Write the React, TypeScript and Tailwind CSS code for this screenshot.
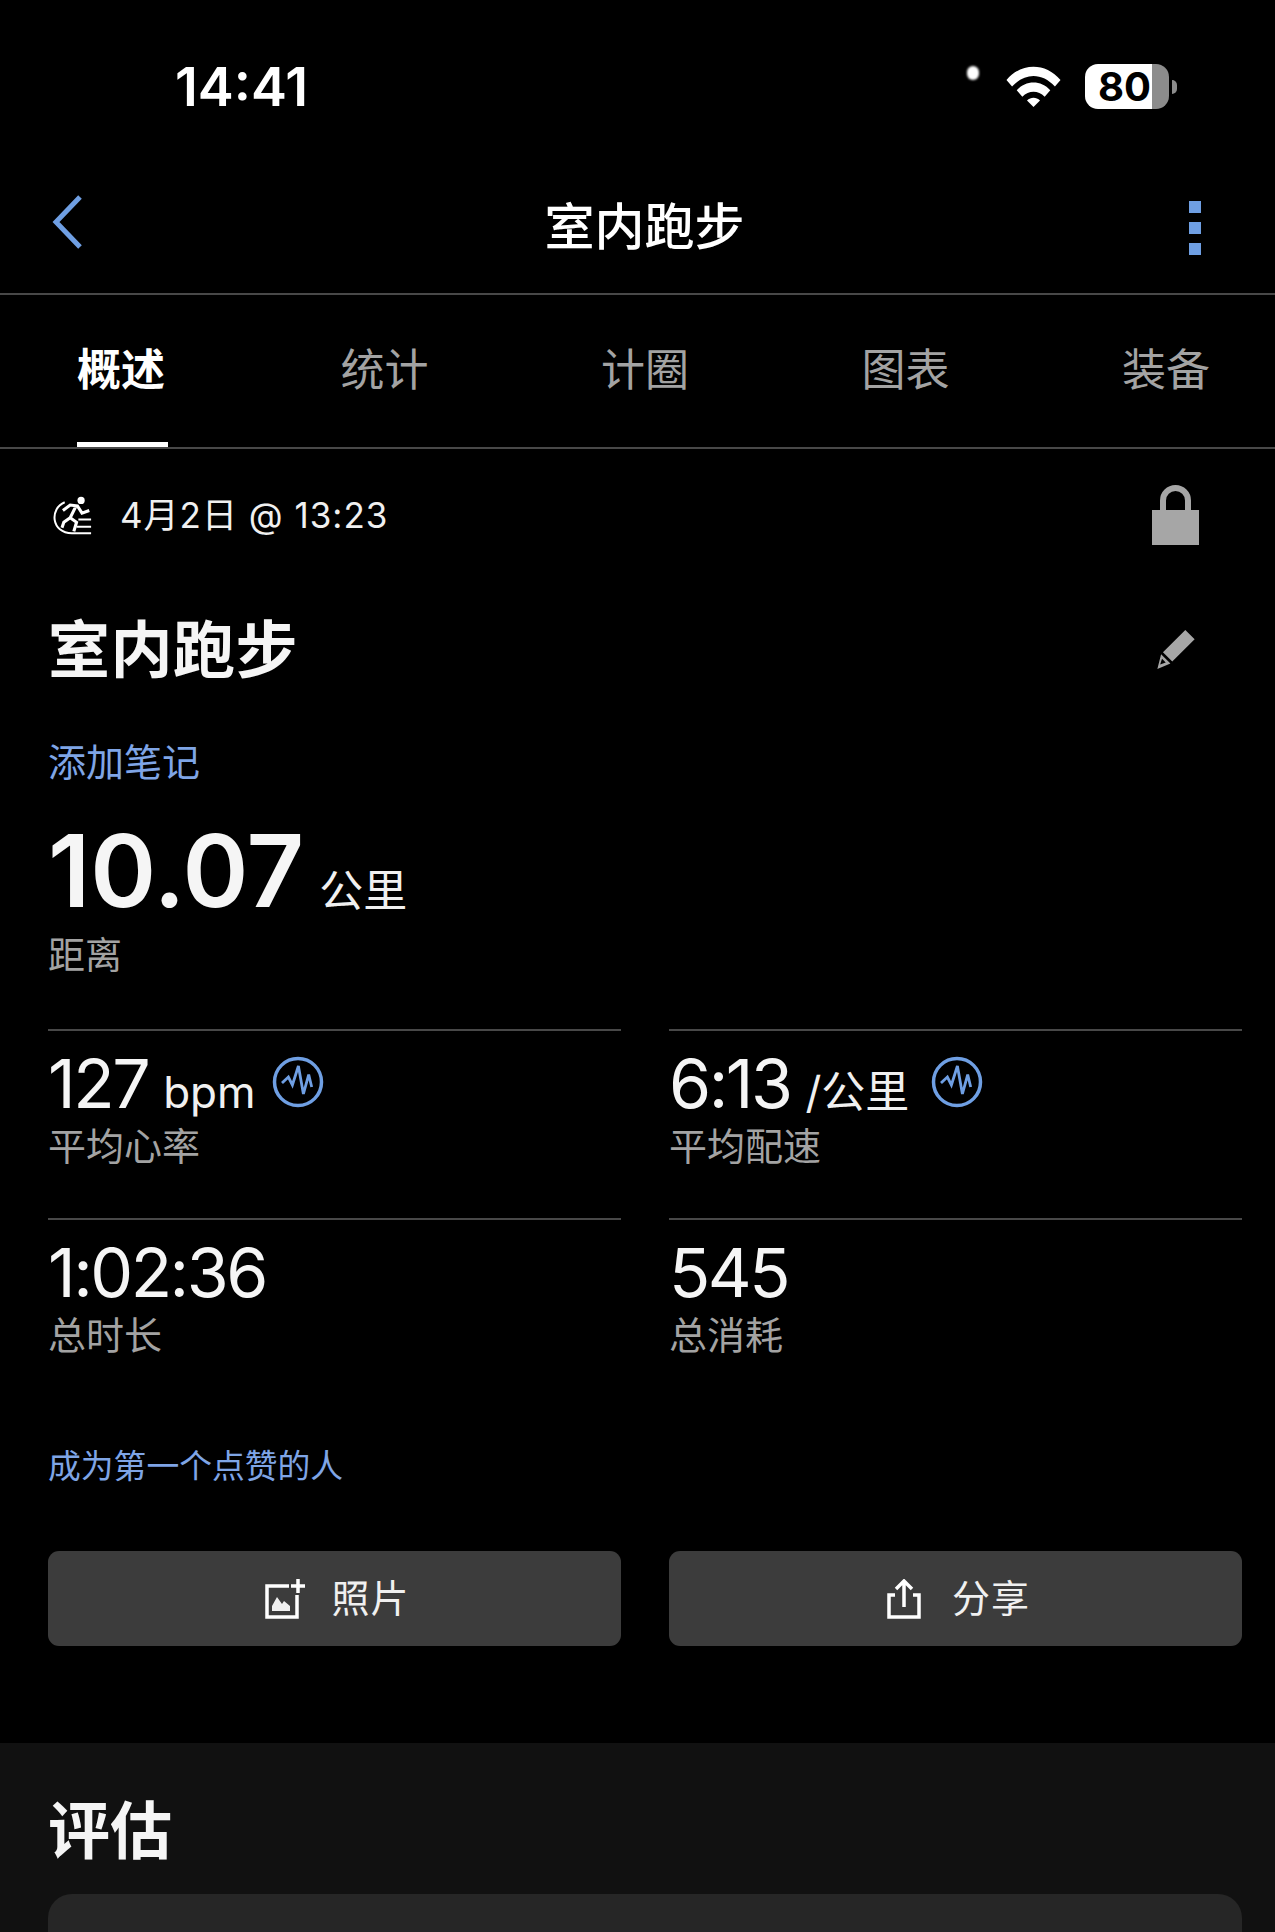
const Pulse = () => (
  <svg width="52" height="52" viewBox="0 0 52 52" fill="none" className="shrink-0">
    <circle cx="26" cy="26" r="23.5" stroke="#6f9fe3" strokeWidth="3.5" />
    <path d="M10 27l6.400-6 4 8 6-19 5 28 5.300-19.400 3 12.400" stroke="#6f9fe3" strokeWidth="2.8" strokeLinejoin="miter" />
  </svg>
);

const Stat = (props: any) => {
  return (
    <div className="h-[189px] border-t-2 border-[#484848]">
      <div className="h-[62px] mt-[21px] flex items-baseline">
        <span className="text-[68px] leading-[62px] tracking-[-2.5px] text-[#f5f5f5]">{props.value}</span>
        {props.unit && <span className="ml-[15px] text-[44px] leading-[54px] text-[#f0f0f0]">{props.unit}</span>}
        {props.pulse && <span className={props.pulse + " mb-[6px] self-end"}><Pulse /></span>}
      </div>
      <div className="text-[38px] leading-[46px] mt-[9px] text-[#a3a3a3]">{props.label}</div>
    </div>
  );
};

const ActionButton = (props: any) => {
  return (
    <button className="h-[95px] pl-[6px] bg-[#3c3c3c] rounded-[11px] flex items-center justify-center text-[38px] text-[#f0f0f0]">
      {props.icon}
      <span className={props.gap + " tracking-[1px]"}>{props.label}</span>
    </button>
  );
};

const tabs = ["概述", "统计", "计圈", "图表", "装备"];

export default function App() {
  return (
    <div className="w-[1275px] h-[1932px] overflow-hidden bg-black text-white font-['Inter','Noto_Sans_CJK_SC',sans-serif]">
      <div className="h-[176px] pt-[55px] pl-[175px] pr-[98px] flex justify-between items-start">
        <span className="text-[54px] leading-[64px] font-semibold">14:41</span>
        <div className="flex items-center mt-[9px] relative">
          <span className="absolute left-[-38px] top-[2px] w-[12px] h-[14px] rounded-full bg-white blur-[1px]" />
          <svg width="57" height="41" viewBox="0 0 58 44" className="mr-[23px]">
            <path d="M0 15C16 -4 42 -4 58 15l-6 7C38 7 20 7 6 22z" fill="#fff" />
            <path d="M11 26c10-11 26-11 36 0l-6 7c-7-7-17-7-24 0z" fill="#fff" />
            <path d="M22 37c4-4 10-4 14 0l-7 7z" fill="#fff" />
          </svg>
          <div className="w-[84px] h-[45px] rounded-[13px] bg-[linear-gradient(90deg,#fff_0,#fff_80%,#8c8c8c_80%,#8c8c8c_100%)] flex items-center justify-center text-black text-[40px] leading-none font-bold pr-[5px]">80</div>
          <span className="ml-[3px] w-[5px] h-[14px] rounded-r-full bg-[#8c8c8c]" />
        </div>
      </div>

      <div className="h-[119px] pl-[52px] pr-[74px] border-b-2 border-[#484848] flex items-center justify-between">
        <svg width="32" height="54" viewBox="0 0 32 54" fill="none" className="mb-[25px]">
          <path d="M28 2L4 27l24 25" stroke="#6f9fe3" strokeWidth="5" />
        </svg>
        <span className="text-[50px] leading-[60px] font-medium mb-[15px] ml-[16px]">室内跑步</span>
        <div className="flex flex-col gap-[9px] w-[12px] mb-[14px]">
          <span className="w-[12px] h-[12px] bg-[#6f9fe3]" />
          <span className="w-[12px] h-[12px] bg-[#6f9fe3]" />
          <span className="w-[12px] h-[12px] bg-[#6f9fe3]" />
        </div>
      </div>

      <div className="h-[154px] border-b-2 border-[#484848] pl-[77px] pr-[65px] flex justify-between">
        {tabs.map((t, i) => (
          <div key={t} className={i === 0 ? "w-[91px] border-b-[5px] border-white text-white font-semibold text-[44px] leading-[150px] whitespace-nowrap" : "w-[88px] text-[#a3a3a3] text-[44px] leading-[150px] whitespace-nowrap"}>{t}</div>
        ))}
      </div>

      <div className="pl-[48px] pr-[33px]">
        <div className="h-[132px] flex items-center justify-between">
          <div className="flex items-center">
            <svg width="40" height="40" viewBox="0 0 44 44" fill="none" className="ml-[4px]">
              <circle cx="32" cy="6" r="4" fill="#fff" />
              <path d="M12 17l8-6 8 1 5 8 8-3M26 13l-6 12 7 5-3 10M20 25l-7 5-2 6" stroke="#fff" strokeWidth="3.4" />
              <path d="M14 8C-3 15-1 42 22 42h21M29 27h14M27 35h16" stroke="#fff" strokeWidth="2.2" />
            </svg>
            <span className="ml-[28px] text-[35px] leading-[44px] text-[#f0f0f0] tracking-[1px]">4月2日 @ 13:23</span>
          </div>
          <svg width="47" height="60" viewBox="0 0 47 60" fill="#a6a6a6" className="mr-[43px]">
            <path d="M0 25h47v35H0z" />
            <path d="M8 26V15.500a15.500 15.500 0 0 1 31 0V26h-6V15.500a9.500 9.500 0 0 0-19 0V26z" />
          </svg>
        </div>

        <div className="h-[104px] mt-[18px] flex items-center justify-between">
          <h1 className="text-[62px] leading-[72px] font-bold tracking-[0.5px] text-[#f5f5f5]">室内跑步</h1>
          <svg width="40" height="41" viewBox="0 0 42 44" fill="#a6a6a6" className="mr-[46px] mb-[4px]">
            <path d="M31 1l10 10-24 24-10-10zM5 27l10 10-14 6zm1 5l-2 6 6-2z" fillRule="evenodd" />
          </svg>
        </div>

        <div className="text-[38px] leading-[46px] text-[#7fa5e6] mt-[36px]">添加笔记</div>

        <div className="flex items-baseline mt-[36px] h-[100px]">
          <span className="text-[100px] leading-[100px] font-semibold text-[#f5f5f5]">10.07</span>
          <span className="ml-[15px] text-[44px] leading-[52px] text-[#f0f0f0]">公里</span>
        </div>
        <div className="text-[37px] leading-[46px] text-[#a3a3a3] mt-[12px]">距离</div>

        <div className="grid grid-cols-[573px_573px] gap-x-[48px] mt-[50px]">
          <Stat value="127" unit="bpm" label="平均心率" pulse="ml-[16px]" />
          <Stat value="6:13" unit="/公里" label="平均配速" pulse="ml-[22px]" />
          <Stat value="1:02:36" label="总时长" />
          <Stat value="545" label="总消耗" />
        </div>

        <div className="text-[32.800px] leading-[40px] text-[#7fa5e6] mt-[39px]">成为第一个点赞的人</div>

        <div className="grid grid-cols-[573px_573px] gap-x-[48px] mt-[65px]">
          <ActionButton
            label="照片"
            gap="ml-[26px]"
            icon={
              <svg width="40" height="40" viewBox="0 0 40 40" fill="none">
                <path d="M24 7H2v31h30V16" stroke="#fff" strokeWidth="3.5" />
                <path d="M33 0v14M26 7h14" stroke="#fff" strokeWidth="3.5" />
                <path d="M7 32v-5l5-9 5 7 2-3 6 5v5z" fill="#f0f0f0" />
              </svg>
            }
          />
          <ActionButton
            label="分享"
            gap="ml-[31px]"
            icon={
              <svg width="34" height="40" viewBox="0 0 34 40" fill="none">
                <path d="M8 16H2v22h30V16h-6" stroke="#fff" strokeWidth="3.5" />
                <path d="M17 3v25M9 10l8-8 8 8" stroke="#fff" strokeWidth="3.5" />
              </svg>
            }
          />
        </div>
      </div>

      <div className="mt-[97px] h-[300px] bg-[#111111] px-[48px] pt-[53px]">
        <h2 className="text-[62px] leading-[72px] font-bold text-[#f5f5f5]">评估</h2>
        <div className="mt-[26px] h-[220px] w-[1194px] bg-[#262626] rounded-[24px]" />
      </div>
    </div>
  );
}
